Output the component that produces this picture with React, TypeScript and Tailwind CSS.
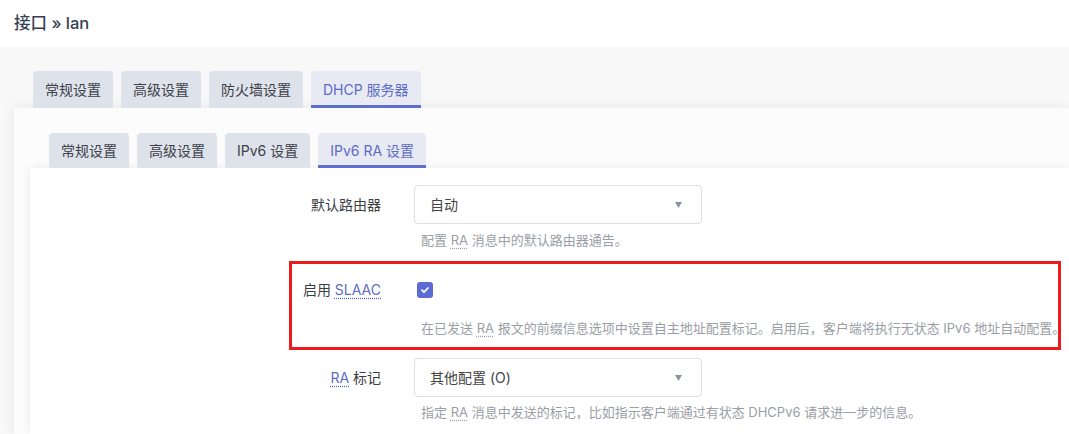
import React from "react";

const font = "font-['Inter','Noto_Sans_CJK_SC',sans-serif]";

function Tab({ label, active }: { label: string; active?: boolean }) {
    return (
        <li
            className={`flex items-center px-3 rounded-t-[4px] text-[14px] leading-none ${
                active
                    ? "bg-[#e7e9f3] text-[#5d6cc4] border-b-[3px] border-[#5f6fcd] pt-[3px]"
                    : "bg-[#dee2ea] text-[#3c4048]"
            }`}
        >
            {label}
        </li>
    );
}

function Abbr({ children, blue }: { children: React.ReactNode; blue?: boolean }) {
    return (
        <span
            className={`underline decoration-dotted underline-offset-[3px] ${
                blue ? "text-[#5d6cc4] decoration-[#5d6cc4]" : "decoration-[#9aa0a8]"
            }`}
        >
            {children}
        </span>
    );
}

function Select({ value }: { value: string }) {
    return (
        <div className="w-[288px] h-[39px] border border-[#dcdfe4] rounded-[4px] bg-white flex items-center justify-between pl-[15px] pr-[19px] text-[14px] text-[#444]">
            <span>{value}</span>
            <svg width="7" height="6" viewBox="0 0 7 6">
                <path d="M0 0h7L3.5 6z" fill="#8a939e" />
            </svg>
        </div>
    );
}

function Row({
    label,
    desc,
    children,
    descMt = "mt-[7px]",
}: {
    label: React.ReactNode;
    desc: React.ReactNode;
    children: React.ReactNode;
    descMt?: string;
}) {
    return (
        <div className="flex">
            <div className="w-[351px] h-[39px] flex items-center justify-end text-[14px] text-[#3a3d44]">
                {label}
            </div>
            <div className="ml-[33px] flex flex-col">
                <div className="h-[39px] flex items-center">{children}</div>
                <div className={`${descMt} pl-[7px] text-[13px] leading-[18px] text-[#9a9ea6]`}>{desc}</div>
            </div>
        </div>
    );
}

export default function App() {
    return (
        <div className={`min-h-[434px] bg-white ${font} overflow-hidden`}>
            {/* Header */}
            <div className="h-[47px] px-[14px] flex items-center text-[16.5px] font-medium text-[#34404f]">
                接口 » lan
            </div>

            <div className="bg-[#f8f8f8] pt-[24px] pl-[14px] min-h-[387px]">
                {/* Outer tabs */}
                <ul className="flex gap-[8px] pl-[19px] h-[37px]">
                    <Tab label="常规设置" />
                    <Tab label="高级设置" />
                    <Tab label="防火墙设置" />
                    <Tab label="DHCP 服务器" active />
                </ul>

                {/* Outer card */}
                <div className="bg-[#fcfcfc] shadow-[0_0_12px_rgba(0,0,0,0.07)] pt-[25px] pl-[16px] min-h-[326px]">
                    <ul className="flex gap-[8px] pl-[19px] h-[35px]">
                        <Tab label="常规设置" />
                        <Tab label="高级设置" />
                        <Tab label="IPv6 设置" />
                        <Tab label="IPv6 RA 设置" active />
                    </ul>

                    {/* Inner card */}
                    <div className="bg-white shadow-[0_0_10px_rgba(0,0,0,0.07)] pt-[17px] min-h-[266px] flex flex-col gap-[21px]">
                        <Row
                            label="默认路由器"
                            desc={
                                <>
                                    配置 <Abbr>RA</Abbr> 消息中的默认路由器通告。
                                </>
                            }
                        >
                            <Select value="自动" />
                        </Row>

                        <div className="relative">
                            <Row
                                label={
                                    <>
                                        启用&nbsp;<Abbr blue>SLAAC</Abbr>
                                    </>
                                }
                                descMt="mt-[10px]"
                                desc={
                                    <>
                                        在已发送 <Abbr>RA</Abbr> 报文的前缀信息选项中设置自主地址配置标记。启用后，客户端将执行无状态 IPv6 地址自动配置。
                                    </>
                                }
                            >
                                <span className="ml-[3px] w-[16px] h-[16px] rounded-[3px] bg-[#5b6bd3] flex items-center justify-center">
                                    <svg width="10" height="10" viewBox="0 0 10 10">
                                        <path d="M2 5.2l2 2L8 3" stroke="white" strokeWidth="1.8" fill="none" strokeLinecap="round" strokeLinejoin="round" />
                                    </svg>
                                </span>
                            </Row>
                            {/* highlight annotation */}
                            <div className="absolute left-[259px] top-[-9px] w-[772px] h-[89px] border-[3px] border-[#ec1c1c] pointer-events-none" />
                        </div>

                        <Row
                            label={
                                <>
                                    <Abbr blue>RA</Abbr>&nbsp;标记
                                </>
                            }
                            descMt="mt-[6px]"
                            desc={
                                <>
                                    指定 <Abbr>RA</Abbr> 消息中发送的标记，比如指示客户端通过有状态 DHCPv6 请求进一步的信息。
                                </>
                            }
                        >
                            <Select value="其他配置 (O)" />
                        </Row>
                    </div>
                </div>
            </div>
        </div>
    );
}
